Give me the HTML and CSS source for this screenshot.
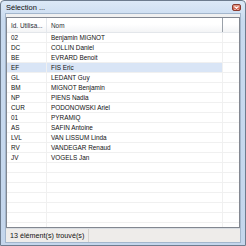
FILE: index.html
```html
<!doctype html>
<html lang="fr">
  <head>
    <meta charset="UTF-8" />
    <title>Sélection</title>
    <link rel="stylesheet" href="styles.css">
  </head>
  <body>
    <div class="window">
      <div class="titlebar">
        <span class="title">Sélection ...</span>
        <span class="close">
          <svg width="5" height="4" viewBox="0 0 5 4">
            <path d="M0.5 0.5 L4.5 3.5 M4.5 0.5 L0.5 3.5" stroke="#fff" stroke-width="1.1" />
          </svg>
        </span>
      </div>

      <div class="client">
        <div class="listview">
          <div class="row header">
            <div class="cell">Id. Utilisa...</div>
            <div class="cell">Nom</div>
            <div class="cell fill"></div>
          </div>

          <div class="row"><div class="cell">02</div><div class="cell">Benjamin MIGNOT</div><div class="cell fill"></div></div>
          <div class="row"><div class="cell">DC</div><div class="cell">COLLIN Daniel</div><div class="cell fill"></div></div>
          <div class="row"><div class="cell">BE</div><div class="cell">EVRARD Benoit</div><div class="cell fill"></div></div>
          <div class="row selected"><div class="cell">EF</div><div class="cell">FIS Eric</div><div class="cell fill"></div></div>
          <div class="row"><div class="cell">GL</div><div class="cell">LEDANT Guy</div><div class="cell fill"></div></div>
          <div class="row"><div class="cell">BM</div><div class="cell">MIGNOT Benjamin</div><div class="cell fill"></div></div>
          <div class="row"><div class="cell">NP</div><div class="cell">PIENS Nadia</div><div class="cell fill"></div></div>
          <div class="row"><div class="cell">CUR</div><div class="cell">PODONOWSKI Ariel</div><div class="cell fill"></div></div>
          <div class="row"><div class="cell">01</div><div class="cell">PYRAMIQ</div><div class="cell fill"></div></div>
          <div class="row"><div class="cell">AS</div><div class="cell">SAFIN Antoine</div><div class="cell fill"></div></div>
          <div class="row"><div class="cell">LVL</div><div class="cell">VAN LISSUM Linda</div><div class="cell fill"></div></div>
          <div class="row"><div class="cell">RV</div><div class="cell">VANDEGAR Renaud</div><div class="cell fill"></div></div>
          <div class="row"><div class="cell">JV</div><div class="cell">VOGELS Jan</div><div class="cell fill"></div></div>

          <div class="row"><div class="cell"></div><div class="cell"></div><div class="cell fill"></div></div>
          <div class="row"><div class="cell"></div><div class="cell"></div><div class="cell fill"></div></div>
          <div class="row"><div class="cell"></div><div class="cell"></div><div class="cell fill"></div></div>
          <div class="row"><div class="cell"></div><div class="cell"></div><div class="cell fill"></div></div>
          <div class="row"><div class="cell"></div><div class="cell"></div><div class="cell fill"></div></div>
          <div class="row"><div class="cell"></div><div class="cell"></div><div class="cell fill"></div></div>
          <div class="row"><div class="cell"></div><div class="cell"></div><div class="cell fill"></div></div>
        </div>

        <div class="statusbar">
          <span class="panel">13 élément(s) trouvé(s)</span>
        </div>
      </div>
    </div>
  </body>
</html>
```

FILE: styles.css
```css
body {
  margin: 0;
  padding: 0;
  font-family: "Liberation Sans", Arial, sans-serif;
  background-color: #ffffff;
}

.window {
  width: 246px;
  height: 246px;
  box-sizing: border-box;
  border: 1px solid #6d7c8e;
  border-radius: 4px 4px 0 0;
  background: linear-gradient(#dce9f7, #c8daef 20px, #c4d6ec);
  display: flex;
  flex-direction: column;
}

.titlebar {
  height: 12px;
  display: flex;
  align-items: center;
  justify-content: space-between;
  padding: 0 4px 0 5px;
}

.title {
  font-size: 7.5px;
  color: #111;
}

.close {
  width: 9px;
  height: 7px;
  box-sizing: border-box;
  border: 1px solid #8b3b30;
  border-radius: 2px;
  background: linear-gradient(#e59a86, #c9513d);
  display: flex;
  align-items: center;
  justify-content: center;
  margin-top: 1px;
}

.client {
  flex: 1;
  margin: 0 4px 2px 4px;
  border: 1px solid #a3b6cc;
  background-color: #f0f0f0;
  display: flex;
  flex-direction: column;
}

.listview {
  height: 211px;
  margin-top: 3px;
  box-sizing: border-box;
  border: 1px solid #828790;
  background-color: #fff;
  overflow: hidden;
}

.row {
  display: grid;
  grid-template-columns: 40px 176px 1fr;
  height: 10px;
  box-sizing: border-box;
  border-bottom: 1px solid #f0f0f0;
  font-size: 6.4px;
  color: #111;
}

.cell {
  padding-left: 4px;
  line-height: 9px;
  border-right: 1px solid #f0f0f0;
  white-space: nowrap;
  overflow: hidden;
}

.cell.fill {
  border-right: none;
}

.row.selected .cell:not(.fill) {
  background-color: #d9e5f6;
}

.header {
  height: 15px;
  border-bottom: 1px solid #e3e6ea;
  background: linear-gradient(#ffffff, #ffffff 45%, #f3f4f6);
  color: #2a2e34;
}

.header .cell {
  line-height: 15px;
  border-right: 1px solid #e4e8ed;
}

.header .cell:nth-child(2) {
  border-right: 1px solid #9aa1a9;
}

.header .cell.fill {
  border-right: none;
}

.statusbar {
  flex: 1;
  display: flex;
  align-items: center;
  border-top: 1px solid #d9dde2;
  background-color: #eeecea;
  padding-left: 2px;
}

.panel {
  font-size: 7.2px;
  color: #111;
  padding: 2px 4px 2px 2px;
  border-right: 1px solid #d6d3cf;
}
```
